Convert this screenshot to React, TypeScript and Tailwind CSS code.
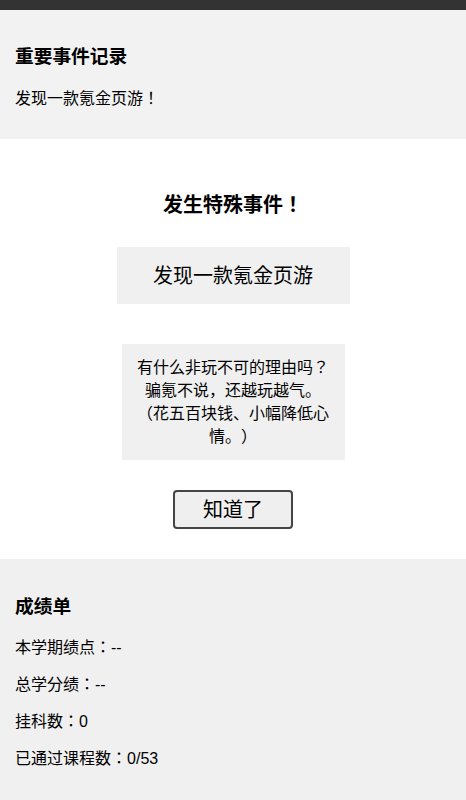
const FONT = "font-['Liberation_Sans','Noto_Sans_CJK_JP','Noto_Sans_CJK_SC',sans-serif]";

const grades = [
  { label: "本学期绩点", value: "--" },
  { label: "总学分绩", value: "--" },
  { label: "挂科数", value: "0" },
  { label: "已通过课程数", value: "0/53" },
];

export default function App() {
  return (
    <div className={`${FONT} [text-spacing-trim:space-all] w-[466px] h-[800px] bg-white text-black text-[16px] overflow-hidden`}>
      <div className="h-[10px] bg-[#333333]" />

      <section className="bg-[#f2f2f2] pt-[35px] pb-[29px] px-[15px]">
        <h3 className="text-[18.72px] font-bold leading-[24px]">重要事件记录</h3>
        <p className="mt-[19px] leading-[22px]">发现一款氪金页游！</p>
      </section>

      <section className="h-[420px] flex flex-col items-center pt-[52px]">
        <h2 className="text-[20px] font-bold leading-[28px]">发生特殊事件！</h2>
        <div className="mt-[28px] w-[233px] h-[57px] bg-[#f0f0f0] flex items-center justify-center text-[20px]">
          发现一款氪金页游
        </div>
        <div className="mt-[40px] w-[223px] bg-[#f0f0f0] px-[10px] py-[12px] text-center leading-[23px]">
          有什么非玩不可的理由吗？
          <br />
          骗氪不说，还越玩越气。
          <br />
          （花五百块钱、小幅降低心情。）
        </div>
        <button className="mt-[30px] w-[120px] h-[39px] border-2 border-[#444444] rounded-[4px] bg-[#efefef] text-[20px] leading-none">
          知道了
        </button>
      </section>

      <section className="bg-[#f0f0f0] h-[241px] pt-[36px] px-[15px]">
        <h3 className="text-[18.72px] font-bold leading-[24px]">成绩单</h3>
        <div className="mt-[18px] flex flex-col gap-[15px]">
          {grades.map((g) => (
            <p key={g.label} className="leading-[22px]">
              {g.label}：{g.value}
            </p>
          ))}
        </div>
      </section>
    </div>
  );
}
